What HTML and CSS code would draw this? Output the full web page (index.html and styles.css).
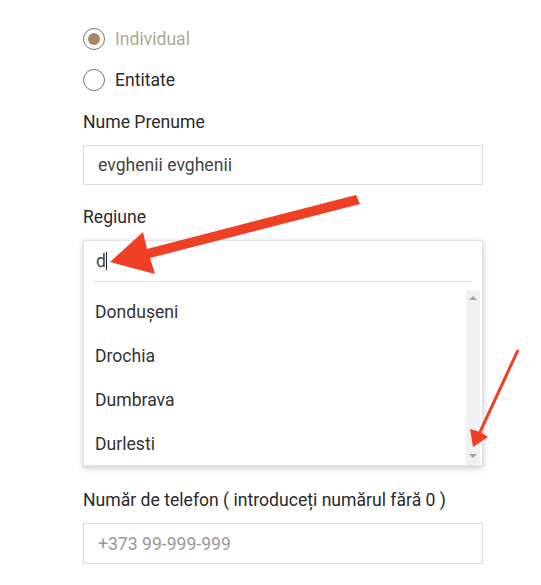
FILE: index.html
```html
<!DOCTYPE html>
<html lang="ro">
<head>
    <meta charset="UTF-8">
    <meta name="viewport" content="width=device-width, initial-scale=1.0">
    <title>Date personale</title>
    <link rel="stylesheet" href="styles.css">
</head>
<body>
    <div class="form">
        <label class="choice disabled">
            <span class="radio checked"></span>
            Individual
        </label>
        <label class="choice">
            <span class="radio"></span>
            Entitate
        </label>

        <div class="field">
            <div class="field-label">Nume Prenume</div>
            <div class="text-input">evghenii evghenii</div>
        </div>

        <div class="field field-open">
            <div class="field-label">Regiune</div>
            <div class="dropdown">
                <div class="search"><span class="typed">d</span><span class="caret"></span></div>
                <div class="options">
                    <ul class="option-list">
                        <li>Dondușeni</li>
                        <li>Drochia</li>
                        <li>Dumbrava</li>
                        <li>Durlesti</li>
                    </ul>
                    <div class="scrollbar">
                        <span class="arrow-up"></span>
                        <span class="arrow-down"></span>
                    </div>
                </div>
            </div>
        </div>

        <div class="field">
            <div class="field-label">Număr de telefon ( introduceți numărul fără 0 )</div>
            <div class="text-input placeholder">+373 99-999-999</div>
        </div>
    </div>

    <!-- red pointers drawn on top -->
    <svg class="marks" width="541" height="585" viewBox="0 0 541 585">
        <polygon fill="#ef3f24" points="110,262 143,232 147,249 356,195 360,204 150,258 155,274"/>
        <polygon fill="#ef3f24" points="473,447 470,429 478.6,431.4 516.6,349.4 519.4,350.6 481.4,432.6 488,437"/>
    </svg>
</body>
</html>
```

FILE: styles.css
```css
body {
    margin: 0;
    font-family: Roboto, "Liberation Sans", sans-serif;
    font-size: 17.6px;
    color: #2a2a2a;
    background: #fff;
}
.form {
    width: 400px;
    padding: 28px 0 0 83px;
}
.choice {
    display: flex;
    align-items: center;
    gap: 10px;
    height: 22px;
    margin-bottom: 19px;
}
.choice.disabled {
    color: #b1a891;
}
.radio {
    width: 22px;
    height: 22px;
    box-sizing: border-box;
    border: 1.5px solid #777;
    border-radius: 50%;
    display: flex;
    align-items: center;
    justify-content: center;
}
.radio.checked::after {
    content: "";
    width: 12px;
    height: 12px;
    border-radius: 50%;
    background: #a58665;
}
.choice + .field {
    margin-top: 21px;
}
.field {
    margin-bottom: 22px;
}
.field-open {
    margin-bottom: 24px;
}
.field-label {
    line-height: 20px;
    margin-bottom: 13px;
}
.text-input {
    height: 40px;
    box-sizing: border-box;
    border: 1px solid #dcdcdc;
    padding: 0 14px;
    display: flex;
    align-items: center;
    color: #444;
}
.text-input.placeholder {
    color: #999;
    height: 41px;
}
.dropdown {
    height: 226px;
    box-sizing: border-box;
    border: 1px solid #e2e2e2;
    box-shadow: 0 2px 6px rgba(0, 0, 0, 0.22);
    background: #fff;
}
.search {
    height: 40px;
    margin: 0 10px;
    padding-left: 2px;
    border-bottom: 1px solid #e0e0e0;
    display: flex;
    align-items: center;
    color: #444;
}
.caret {
    width: 1px;
    height: 18px;
    background: #222;
}
.options {
    display: flex;
    margin-top: 8px;
    height: 175px;
}
.option-list {
    list-style: none;
    margin: 0;
    padding: 0 0 0 11px;
    flex: 1;
}
.option-list li {
    height: 44px;
    line-height: 44px;
    color: #333;
}
.scrollbar {
    width: 14px;
    margin-right: 2px;
    background: #f1f1f1;
    display: flex;
    flex-direction: column;
    justify-content: space-between;
    align-items: center;
    padding: 6px 0 7px;
    box-sizing: border-box;
}
.arrow-up,
.arrow-down {
    width: 0;
    height: 0;
    border-left: 4px solid transparent;
    border-right: 4px solid transparent;
}
.arrow-up {
    border-bottom: 4px solid #a3a3a3;
}
.arrow-down {
    border-top: 4px solid #a3a3a3;
}
.marks {
    position: absolute;
    left: 0;
    top: 0;
    pointer-events: none;
}
```
